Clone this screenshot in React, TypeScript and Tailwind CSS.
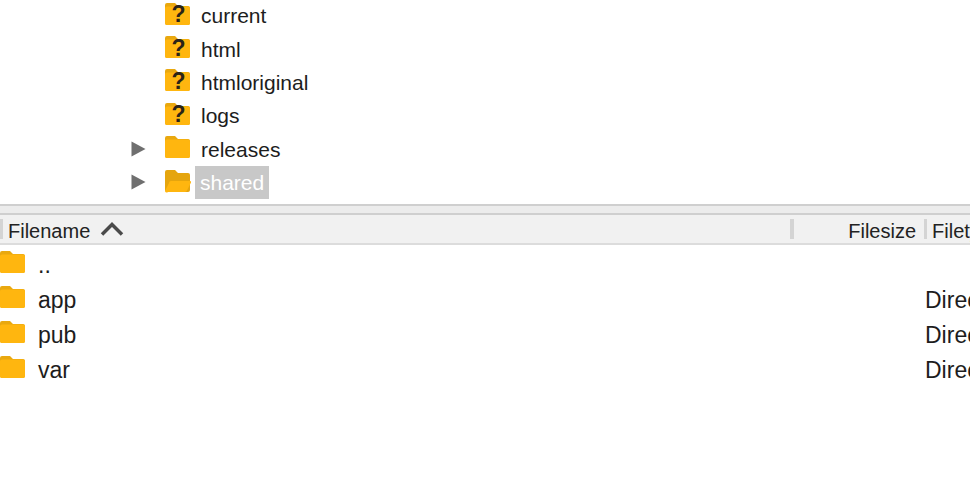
import React from "react";

const FolderIcon = ({ open = false, unknown = false }: { open?: boolean; unknown?: boolean }) => (
  <div className="relative h-[24px] w-[26px] shrink-0">
    {open ? (
      <svg width="26" height="24" viewBox="0 0 26 24">
        <path d="M0 3a2 2 0 0 1 2-2h8l3 3h10a2 2 0 0 1 2 2v15a2 2 0 0 1-2 2H2a2 2 0 0 1-2-2z" fill="#E5A50E" />
        <path d="M3 23a2 2 0 0 1-3-1l4-8a2 2 0 0 1 2-2h19a1 1 0 0 1 1 1.500l-4 8a3 3 0 0 1-2 1.500z" fill="#FFB60F" />
      </svg>
    ) : (
      <svg width="26" height="24" viewBox="0 0 26 24">
        <path d="M0 3a2 2 0 0 1 2-2h8l3 3h10a2 2 0 0 1 2 2v15a2 2 0 0 1-2 2H2a2 2 0 0 1-2-2z" fill="#E9A80F" />
        <path d="M0 6.500a2 2 0 0 1 2-2h21a2 2 0 0 1 2 2V21a2 2 0 0 1-2 2H2a2 2 0 0 1-2-2z" fill="#FFB60F" />
      </svg>
    )}
    {unknown && (
      <span className="absolute inset-0 flex items-center justify-center pl-[1px] pt-[2px] font-['Liberation_Sans',sans-serif] text-[23px] font-bold leading-none text-[#2b2418]">
        ?
      </span>
    )}
  </div>
);

const TreeRow = ({
  name,
  unknown,
  arrow,
  open,
  selected,
}: {
  name: string;
  unknown?: boolean;
  arrow?: boolean;
  open?: boolean;
  selected?: boolean;
}) => (
  <div className="flex h-[33.4px] items-center pl-[131px]">
    <div className="w-[34px] shrink-0">
      {arrow && (
        <svg width="15" height="16" viewBox="0 0 15 16" className="mb-[1px]">
          <path d="M0.500 0.500L14.500 8L0.500 15.500z" fill="#6f6f6f" />
        </svg>
      )}
    </div>
    <div className="-mt-[4px]">
      <FolderIcon unknown={unknown} open={open} />
    </div>
    <span
      className={
        selected
          ? "ml-[4px] flex h-[33px] items-center bg-[#c8c8c8] px-[5px] text-white"
          : "ml-[10px] text-[#1d1d1d]"
      }
    >
      {name}
    </span>
  </div>
);

const FileRow = ({ name, dir = true }: { name: string; dir?: boolean }) => (
  <div className="flex h-[35px] items-center text-[23px] text-[#1d1d1d]">
    <div className="-mt-[7px]">
      <FolderIcon />
    </div>
    <span className="ml-[12px] flex-1">{name}</span>
    {dir && <span className="w-[45px] shrink-0 whitespace-nowrap">Directory</span>}
  </div>
);

export default function App() {
  return (
    <div className="h-[490px] w-[970px] overflow-hidden bg-white font-['Liberation_Sans',sans-serif] text-[21px] leading-none">
      <div className="h-[204px] overflow-hidden">
        <div className="-mt-[1px]">
          <TreeRow name="current" unknown />
          <TreeRow name="html" unknown />
          <TreeRow name="htmloriginal" unknown />
          <TreeRow name="logs" unknown />
          <TreeRow name="releases" arrow />
          <TreeRow name="shared" arrow open selected />
        </div>
      </div>

      <div className="h-[11px] border-y-2 border-[#cfcfcf] bg-[#ececec]" />

      <div className="flex h-[30px] items-center border-b-2 border-[#dcdcdc] bg-[#f1f1f1] text-[20px] text-[#222]">
        <div className="h-[20px] w-[3px] shrink-0 bg-[#d4d4d4]" />
        <span className="ml-[5px] mt-[4px]">Filename</span>
        <svg width="24" height="16" viewBox="0 0 24 16" className="ml-[10px] shrink-0">
          <path d="M2 13.500L12 3.500L22 13.500" fill="none" stroke="#4a4a4a" strokeWidth="3.500" />
        </svg>
        <div className="ml-[666px] h-[20px] w-[4px] shrink-0 bg-[#d4d4d4]" />
        <span className="ml-[54px] mt-[4px]">Filesize</span>
        <div className="ml-[8px] h-[20px] w-[3px] shrink-0 bg-[#d4d4d4]" />
        <span className="ml-[5px] mt-[4px] whitespace-nowrap">Filetype</span>
      </div>

      <div className="pt-[3px]">
        <FileRow name=".." dir={false} />
        <FileRow name="app" />
        <FileRow name="pub" />
        <FileRow name="var" />
      </div>
    </div>
  );
}
